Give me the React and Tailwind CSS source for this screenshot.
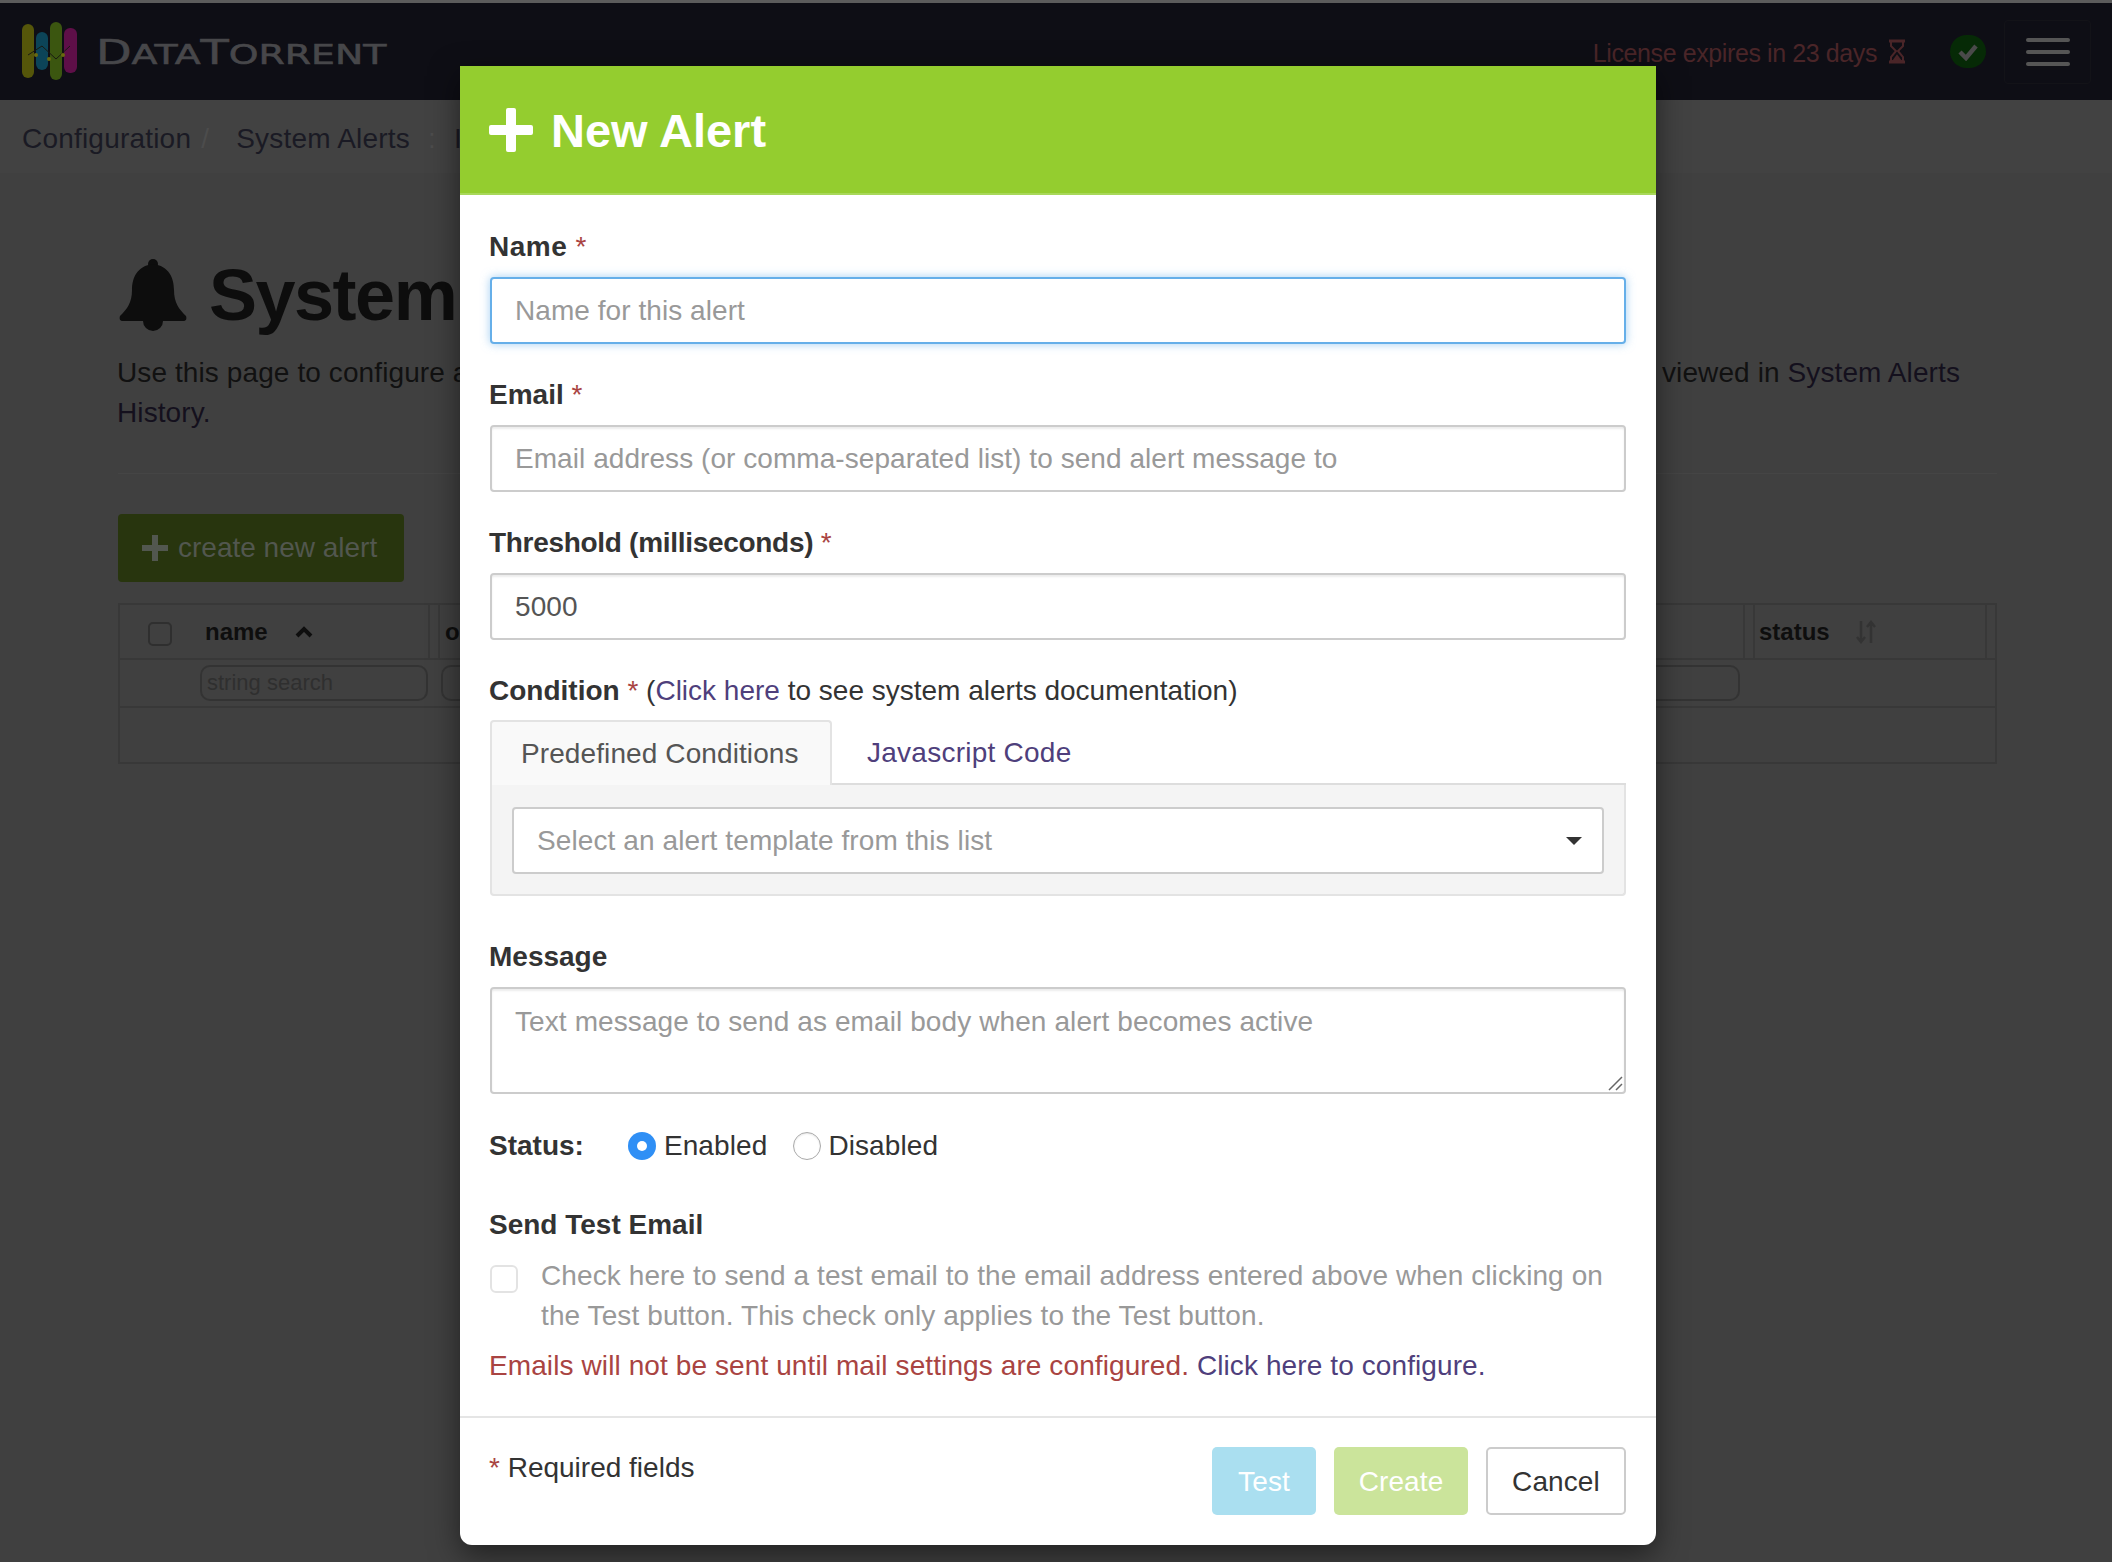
import React from "react";

const Star = () => <span className="text-[#a94442] font-normal"> *</span>;

function Label({ children, className = "" }) {
  return <div className={`h-[40px] leading-[40px] font-bold text-[#333] text-[28px] tracking-normal -ml-[1px] ${className}`}>{children}</div>;
}

function Logo() {
  return (
    <svg width="56" height="60" viewBox="0 0 56 60" className="shrink-0">
      <rect x="0" y="2" width="12" height="54" rx="6" fill="#55560a" />
      <rect x="14" y="10" width="12" height="38" rx="6" fill="#0c4458" />
      <rect x="28" y="0" width="12" height="58" rx="6" fill="#3b5610" />
      <rect x="42" y="6" width="13" height="45" rx="6" fill="#5e0f48" />
      <path d="M6 33 L20 24 M20 24 L34 37 M34 37 L48 24" stroke="#1a1a12" strokeWidth="1" fill="none" />
      <circle cx="14" cy="33" r="2" fill="#6a6a10" />
      <circle cx="27" cy="37" r="2" fill="#6a6a10" />
      <circle cx="41" cy="33" r="2" fill="#6a6a10" />
    </svg>
  );
}

function Background() {
  return (
    <div className="min-h-[1562px] bg-[#404040] font-['Liberation_Sans',Arial,sans-serif] text-[28px]">
      <div className="h-[3px] bg-[#5c5c5c]" />
      <header className="h-[97px] bg-[#0e0e15] flex items-center pl-[22px] pr-[21px]">
        <Logo />
        <div className="ml-[18px] mt-[1px] origin-left scale-x-[1.4] text-[#47474a] font-['DejaVu_Sans',sans-serif] font-normal leading-none whitespace-nowrap text-[27px] [-webkit-text-stroke:0.6px_#47474a]">
          <span className="text-[33px]">D</span>ATA<span className="text-[33px]">T</span>ORRENT
        </div>
        <div className="ml-auto flex items-center">
          <span className="mt-[5px] text-[#4a2528] text-[25px] tracking-[-0.4px]">License expires in 23 days</span>
          <svg width="18" height="25" viewBox="0 0 18 25" className="ml-[11px]" fill="none" stroke="#4a2528" strokeWidth="2">
            <path d="M1 2 H17 M1 23 H17" strokeWidth="3" />
            <path d="M3 3 V7 L8 12 L3 18 V22 H15 V18 L10 12 L15 7 V3" />
            <path d="M6 21 L9 17 L12 21 Z" fill="#4a2528" />
          </svg>
          <span className="ml-[44px] w-[36px] h-[33px] rounded-full bg-[#062a06] flex items-center justify-center">
            <svg width="20" height="18" viewBox="0 0 20 18" fill="none" stroke="#4a4a4a" strokeWidth="4.5">
              <path d="M2 9 L8 15 L18 3" />
            </svg>
          </span>
          <div className="ml-[18px] w-[87px] h-[64px] border border-[#131318] rounded-[4px] flex flex-col items-center justify-center gap-[8px]">
            <span className="w-[44px] h-[4px] rounded-[2px] bg-[#555]" />
            <span className="w-[44px] h-[4px] rounded-[2px] bg-[#555]" />
            <span className="w-[44px] h-[4px] rounded-[2px] bg-[#555]" />
          </div>
        </div>
      </header>

      <nav className="h-[73px] bg-[#424242] flex items-center pl-[22px] pt-[5px] text-[#1a1a24] whitespace-nowrap tracking-[0.2px]">
        <span>Configuration</span>
        <span className="ml-[10px] text-[#4c4c4c]">/</span>
        <span className="ml-[27px]">System Alerts</span>
        <span className="ml-[18px] text-[#4c4c4c]">:</span>
        <span className="ml-[18px]">I</span>
      </nav>

      <main className="pl-[118px] pr-[115px]">
        <div className="flex items-center h-[120px] mt-[62px] text-[#0d0d0d]">
          <svg width="68" height="73" viewBox="0 0 68 73" className="mt-[0px] ml-[1px]" fill="#0d0d0d">
            <circle cx="34" cy="5" r="5" />
            <path d="M34 5 C18 7 13 19 13 31 C13 44 8 50 1 57 C0 60 1 62 4 62 H64 C67 62 68 60 67 57 C60 50 55 44 55 31 C55 19 50 7 34 5 Z" />
            <path d="M24 62 A10 10 0 0 0 44 62 Z" />
          </svg>
          <h1 className="ml-[22px] text-[72px] font-bold leading-none tracking-[-1.5px] whitespace-nowrap">System</h1>
        </div>
        <div className="mt-[-2px] -ml-[1px] pr-[37px] leading-[40px] text-[#111] tracking-[0.1px]">
          <div className="flex justify-between whitespace-nowrap">
            <span>Use this page to configure a</span>
            <span>viewed in <span className="text-[#14101d]">System Alerts</span></span>
          </div>
          <div className="text-[#14101d]">History.</div>
        </div>
        <div className="h-[1px] bg-[#454545] mt-[40px]" />
        <button className="mt-[40px] h-[68px] w-[286px] rounded-[4px] bg-[#28350e] text-[#52574f] flex items-center pl-[24px]">
          <svg width="26" height="26" viewBox="0 0 26 26" fill="#52574f"><path d="M10 0 H16 V10 H26 V16 H16 V26 H10 V16 H0 V10 H10 Z" /></svg>
          <span className="ml-[10px]">create new alert</span>
        </button>

        <div className="mt-[21px] border-2 border-[#383838] text-[24px] text-[#0e0e0e]">
          <div className="h-[55px] flex border-b-2 border-[#383838]">
            <div className="w-[80px] flex items-center pl-[28px]">
              <span className="w-[24px] h-[24px] mt-[4px] rounded-[5px] border-2 border-[#2f2f2f]" />
            </div>
            <div className="w-[230px] flex items-center pl-[5px] font-bold border-r-2 border-[#383838]">
              name
              <svg width="18" height="12" viewBox="0 0 18 12" className="ml-[27px]" fill="none" stroke="#0e0e0e" strokeWidth="4"><path d="M2 10 L9 3 L16 10" /></svg>
            </div>
            <div className="ml-[8px] flex-1 flex items-center pl-[5px] font-bold border-l-2 border-r-2 border-[#383838]">o</div>
            <div className="ml-[8px] w-[234px] flex items-center pl-[4px] font-bold border-l-2 border-r-2 border-[#383838]">
              status
              <svg width="20" height="24" viewBox="0 0 20 24" className="ml-[26px]" fill="none" stroke="#333" strokeWidth="2.5">
                <path d="M5 1 V22 M1 17 L5 22 L9 17 M15 23 V2 M11 7 L15 2 L19 7" />
              </svg>
            </div>
            <div className="w-[8px]" />
          </div>
          <div className="h-[48px] flex items-center border-b-2 border-[#383838]">
            <div className="w-[80px]" />
            <div className="w-[228px] h-[36px] rounded-[10px] border-2 border-[#333] pl-[5px] leading-[32px] text-[22px] text-[#2f2f2f]">string search</div>
            <div className="ml-[13px] w-[1299px] h-[36px] rounded-[10px] border-2 border-[#333]" />
          </div>
          <div className="h-[54px]" />
        </div>
      </main>
    </div>
  );
}

const inputCls = "block w-full h-[67px] px-[23px] rounded-[4px] border-2 border-[#ccc] bg-white text-[28px] text-[#555] tracking-[0.06px] placeholder:text-[#999] outline-none shadow-[inset_0_2px_2px_rgba(0,0,0,0.075)]";

function Modal() {
  return (
    <div className="absolute left-[460px] top-[66px] w-[1196px] h-[1479px] bg-white rounded-b-[12px] overflow-hidden shadow-[0_10px_30px_rgba(0,0,0,0.5)] font-['Liberation_Sans',Arial,sans-serif] text-[28px] text-[#333] tracking-[0.1px]">
      <div className="h-[129px] bg-[#94cd2f] flex items-center pl-[29px] border-b-2 border-[#a8d85a]">
        <svg width="44" height="44" viewBox="0 0 44 44" fill="white"><path d="M17 2 Q17 0 19 0 H25 Q27 0 27 2 V17 H42 Q44 17 44 19 V25 Q44 27 42 27 H27 V42 Q27 44 25 44 H19 Q17 44 17 42 V27 H2 Q0 27 0 25 V19 Q0 17 2 17 H17 Z" /></svg>
        <h2 className="ml-[18px] mt-[2px] text-[47px] font-bold text-white leading-none tracking-normal">New Alert</h2>
      </div>

      <div className="px-[30px] pt-[32px]">
        <Label className="mb-[10px] tracking-[0.5px]!">Name<Star /></Label>
        <input readOnly placeholder="Name for this alert" className={`${inputCls} border-[#66afe9]! shadow-[0_0_10px_rgba(102,175,233,0.6)]!`} />

        <Label className="mt-[31px] mb-[10px]">Email<Star /></Label>
        <input readOnly placeholder="Email address (or comma-separated list) to send alert message to" className={inputCls} />

        <Label className="mt-[31px] mb-[10px] tracking-[-0.3px]!">Threshold (milliseconds)<Star /></Label>
        <input readOnly value="5000" className={inputCls} />

        <div className="mt-[31px] mb-[9px] -ml-[1px] h-[40px] leading-[40px] text-[#333] tracking-normal">
          <span className="font-bold">Condition</span>
          <Star /> (<a className="text-[#4f3f7c]">Click here</a> to see system alerts documentation)
        </div>

        <div className="h-[65px] flex border-b-2 border-[#ddd]">
          <div className="w-[342px] h-[65px] bg-[#f9f9f9] border-2 border-b-0 border-[#e3e3e3] rounded-t-[4px] flex items-center pl-[29px] text-[#555]">Predefined Conditions</div>
          <div className="ml-[35px] h-[65px] flex items-center text-[#4f3f7c] tracking-[0.25px]">Javascript Code</div>
        </div>
        <div className="h-[111px] bg-[#f4f4f4] border-2 border-t-0 border-[#e3e3e3] rounded-b-[4px] px-[20px] pt-[22px]">
          <div className="h-[67px] bg-white border-2 border-[#ccc] rounded-[4px] flex items-center pl-[23px] pr-[20px] text-[#999]">
            Select an alert template from this list
            <span className="ml-auto w-0 h-0 border-l-[8px] border-r-[8px] border-t-[8px] border-l-transparent border-r-transparent border-t-[#333]" />
          </div>
        </div>

        <Label className="mt-[41px] mb-[10px]">Message</Label>
        <div className="relative">
          <textarea readOnly placeholder="Text message to send as email body when alert becomes active" className="block w-full h-[107px] px-[23px] py-[13px] leading-[40px] rounded-[4px] border-2 border-[#ccc] text-[28px] placeholder:text-[#999] outline-none resize-none shadow-[inset_0_2px_2px_rgba(0,0,0,0.075)]" />
          <svg width="16" height="16" viewBox="0 0 16 16" className="absolute right-[3px] bottom-[3px]" fill="none" stroke="#666" strokeWidth="1.5">
            <path d="M2 15 L15 2 M9 15 L15 9" />
          </svg>
        </div>

        <div className="mt-[32px] h-[40px] flex items-center">
          <span className="font-bold tracking-normal -ml-[1px]">Status:</span>
          <span className="ml-[44px] w-[28px] h-[28px] rounded-full bg-[#2f8ff5] flex items-center justify-center"><span className="w-[10px] h-[10px] rounded-full bg-white" /></span>
          <span className="ml-[8px]">Enabled</span>
          <span className="ml-[26px] w-[28px] h-[28px] rounded-full border border-[#aaa] bg-white shadow-[inset_0_1px_2px_rgba(0,0,0,0.1)]" />
          <span className="ml-[7px]">Disabled</span>
        </div>

        <Label className="mt-[39px]">Send Test Email</Label>

        <div className="mt-[11px] flex">
          <span className="mt-[9px] w-[28px] h-[28px] shrink-0 rounded-[6px] border-2 border-[#e3e3e3]" />
          <p className="ml-[23px] leading-[40px] text-[#999]">Check here to send a test email to the email address entered above when clicking on the Test button. This check only applies to the Test button.</p>
        </div>
        <p className="mt-[10px] -ml-[1px] leading-[40px] text-[#a94442]">Emails will not be sent until mail settings are configured. <a className="text-[#4f3f7c]">Click here to configure.</a></p>
      </div>

      <div className="mt-[30px] border-t-2 border-[#e5e5e5] px-[30px] pt-[29px] flex items-start">
        <div className="mt-[1px] -ml-[1px] leading-[40px] tracking-normal"><span className="text-[#a94442]">*</span> Required fields</div>
        <div className="ml-auto flex gap-[18px]">
          <button className="w-[104px] h-[68px] pt-[1px] rounded-[5px] bg-[#aadff0] text-white">Test</button>
          <button className="w-[134px] h-[68px] pt-[1px] rounded-[5px] bg-[#cbe49b] text-white">Create</button>
          <button className="w-[140px] h-[68px] pt-[1px] rounded-[5px] border-2 border-[#ccc] text-[#333]">Cancel</button>
        </div>
      </div>
    </div>
  );
}

export default function App() {
  return (
    <div className="relative h-[1562px] overflow-hidden">
      <Background />
      <Modal />
    </div>
  );
}
